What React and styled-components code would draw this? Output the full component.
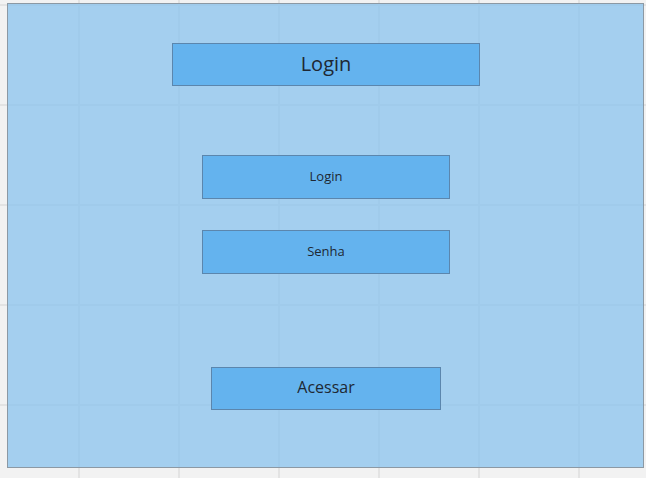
import styled, { createGlobalStyle } from 'styled-components'

const GlobalStyle = createGlobalStyle`
  html, body {
    margin: 0;
    padding: 0;
    background: #f2f2f2;
  }
  body {
    font-family: "Open Sans", "Liberation Sans", sans-serif;
  }
`

const Canvas = styled.div`
  width: 646px;
  height: 478px;
  box-sizing: border-box;
  padding: 3px 0 0 7px;
  background-color: #f2f2f2;
  background-image:
    linear-gradient(to right, transparent 0 98px, #e3e3e3 98px 100px),
    linear-gradient(to bottom, transparent 0 98px, #e3e3e3 98px 100px);
  background-size: 100px 100px;
  background-position: -20px 6px;
  overflow: hidden;
`

const Panel = styled.div`
  width: 637px;
  height: 465px;
  box-sizing: border-box;
  border: 1px solid #8c99a4;
  background: rgba(137, 195, 238, 0.75);
  display: flex;
  flex-direction: column;
  align-items: center;
`

const Box = styled.div`
  box-sizing: border-box;
  width: ${p => p.$w}px;
  height: ${p => p.$h}px;
  margin-top: ${p => p.$top}px;
  margin-left: 1px;
  padding-bottom: 3px;
  background: #64b3ee;
  border: 1px solid #5b86ad;
  display: flex;
  align-items: center;
  justify-content: center;
  color: #1e2833;
  font-size: ${p => p.$size}px;
`

export default function App() {
  return (
    <>
      <GlobalStyle />
      <Canvas>
        <Panel>
          <Box $w={308} $h={43} $top={39} $size={20}>Login</Box>
          <Box $w={248} $h={44} $top={69} $size={13}>Login</Box>
          <Box $w={248} $h={44} $top={31} $size={13}>Senha</Box>
          <Box $w={230} $h={43} $top={93} $size={16}>Acessar</Box>
        </Panel>
      </Canvas>
    </>
  )
}
